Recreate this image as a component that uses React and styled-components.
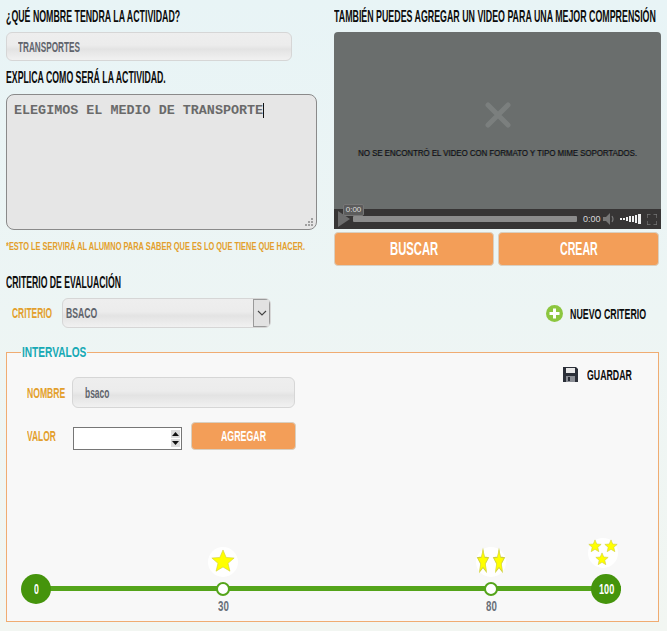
import { useLayoutEffect, useRef, useState } from 'react';
import styled, { createGlobalStyle } from 'styled-components';

const GlobalStyle = createGlobalStyle`
    html, body {
        margin: 0;
        min-height: 631px;
        overflow: hidden;
    }
    body {
        background: linear-gradient(180deg, #e8f4f6 0%, #f2f6f2 100%);
        font-family: "Liberation Sans", Arial, sans-serif;
    }
`;

const glossy = `
    background: linear-gradient(180deg, #eeeeee 0%, #ececec 45%, #e3e3e3 60%, #f1f1f1 100%);
    border: 1px solid #d6d6d6;
    border-radius: 6px;
    box-sizing: border-box;
    color: #60646c;
    font-weight: 700;
`;

const Page = styled.div`
    width: 667px;
    height: 631px;
    box-sizing: border-box;
    padding: 8px 6px 0;
`;

const TopRow = styled.div`
    display: grid;
    grid-template-columns: 311px 327px;
    column-gap: 17px;
`;

const Column = styled.div`
    display: flex;
    flex-direction: column;
`;

const FitBox = styled.span`
    display: inline-block;
    text-align: left;
`;

const FitInner = styled.span`
    display: block;
    width: 100%;
    white-space: nowrap;
    transform-origin: 0 50%;
`;

const Fit = ({ w, children }) => {
    const inner = useRef(null);
    const [scale, setScale] = useState(1);
    useLayoutEffect(() => {
        setScale(w / inner.current.scrollWidth);
    }, [w]);
    return (
        <FitBox style={{ width: w }}>
            <FitInner ref={inner} style={{ transform: `scaleX(${scale})` }}>
                {children}
            </FitInner>
        </FitBox>
    );
};

const Heading = styled.h2`
    margin: ${(p) => p.$margin || '0'};
    height: 16px;
    font-size: 16.5px;
    line-height: 16px;
    font-weight: 700;
    color: #0c0c0c;
`;

const TextField = styled.div`
    ${glossy}
    width: ${(p) => p.$width};
    height: ${(p) => p.$height};
    margin: ${(p) => p.$margin || '0'};
    padding-left: ${(p) => p.$indent};
    display: flex;
    align-items: center;
    font-size: 14px;
`;

const TextBox = styled.div`
    position: relative;
    height: 136px;
    box-sizing: border-box;
    margin-top: 9px;
    padding: 8px 7px;
    background: #e6e6e6;
    border: 1px solid #8a8a8a;
    border-radius: 8px;
    font-family: "Liberation Mono", monospace;
    font-size: 13.4px;
    line-height: 15px;
    font-weight: 700;
    color: #6a6a6a;
`;

const Caret = styled.span`
    border-right: 1px solid #111;
`;

const Grip = styled.svg`
    position: absolute;
    right: 2px;
    bottom: 2px;
`;

const Note = styled.p`
    margin: 9px 0 0;
    font-size: 11.5px;
    line-height: 14px;
    font-weight: 700;
    color: #e39f2c;
`;

const Video = styled.div`
    position: relative;
    height: 197px;
    margin-top: 8px;
    background: #6a6e6d;
    border-radius: 4px 4px 0 0;
    display: flex;
    flex-direction: column;
`;

const Stage = styled.div`
    flex: 1;
    display: flex;
    flex-direction: column;
    align-items: center;
    padding-top: 70px;
`;

const VideoMessage = styled.div`
    margin-top: 19px;
    font-size: 9.5px;
    line-height: 12px;
    color: #111;
    text-shadow: 0.8px 0 0 #2f4560, -0.6px 0 0 #7a6a45;
`;

const Controls = styled.div`
    height: 20px;
    background: #373535;
    display: flex;
    align-items: center;
    padding: 0 4px;
    gap: 3px;
`;

const Progress = styled.div`
    flex: none;
    width: 224px;
    height: 6px;
    border-radius: 1px;
    background: #8c8c8c;
`;

const TimeText = styled.span`
    flex: none;
    margin-left: 3px;
    width: 17px;
    font-size: 9px;
    color: #d8d8d8;
`;

const ControlIcon = styled.svg`
    flex: none;
    margin-left: ${(p) => p.$left || '0'};
`;

const TimeBubble = styled.div`
    position: absolute;
    left: 9px;
    bottom: 13px;
    width: 21px;
    height: 12px;
    background: #5c5c5c;
    border: 1px solid #777;
    border-radius: 2px;
    box-sizing: border-box;
    font-size: 8px;
    line-height: 10px;
    text-align: center;
    color: #dcdcdc;
`;

const ButtonRow = styled.div`
    display: grid;
    grid-template-columns: 160px 161px;
    column-gap: 4px;
    margin-top: 3px;
`;

const OrangeButton = styled.button`
    height: ${(p) => p.$height};
    width: ${(p) => p.$width || 'auto'};
    padding: 0;
    background: #f39e58;
    border: 1px solid #d9cfc0;
    border-radius: 4px;
    color: #fff;
    font-family: inherit;
    font-size: ${(p) => p.$size};
    font-weight: 700;
`;

const CriterionBlock = styled.div`
    margin-top: 8px;
`;

const CriterionRow = styled.div`
    display: flex;
    align-items: center;
    margin-top: 8px;
    height: 30px;
`;

const FieldLabel = styled.label`
    font-size: 14.5px;
    font-weight: 700;
    color: #e39f2c;
    width: ${(p) => p.$width};
    padding-left: ${(p) => p.$indent};
    box-sizing: border-box;
    flex: none;
`;

const SelectBox = styled.div`
    ${glossy}
    width: 209px;
    height: 30px;
    display: flex;
    align-items: center;
    justify-content: space-between;
    padding-left: 3px;
    font-size: 14.5px;
    overflow: hidden;
`;

const SelectArrow = styled.span`
    width: 17px;
    height: 28px;
    display: flex;
    align-items: center;
    justify-content: center;
    background: #e2e2e2;
    border: 1px solid #9a9a9a;
    box-sizing: border-box;
`;

const ActionLink = styled.a`
    display: flex;
    align-items: center;
    gap: ${(p) => p.$gap};
    margin: ${(p) => p.$margin};
    color: #0c0c0c;
    font-size: 15px;
    font-weight: 700;
`;

const Fieldset = styled.fieldset`
    position: relative;
    margin: 16px 0 0;
    width: 653px;
    height: 278px;
    box-sizing: border-box;
    padding: 0 14px 0 18px;
    background: #f8f8f8;
    border: 1px solid #f0ac72;
`;

const Legend = styled.legend`
    margin-left: -4px;
    padding: 0 1px;
    font-size: 15.5px;
    line-height: 16px;
    font-weight: 700;
    color: #16a9b5;
`;

const FormArea = styled.div`
    display: grid;
    grid-template-columns: 272px 1fr;
    padding-top: 17px;
`;

const FormRow = styled.div`
    display: flex;
    align-items: center;
    margin-bottom: ${(p) => p.$gap || '0'};
`;

const ValueBox = styled.div`
    width: 109px;
    height: 23px;
    box-sizing: border-box;
    margin: 5px 9px 0 1px;
    background: #fff;
    border: 1px solid #767676;
    display: flex;
    align-items: center;
    justify-content: flex-end;
    padding-right: 1px;
`;

const ValueInput = styled.input`
    flex: 1;
    min-width: 0;
    height: 100%;
    padding: 0 1px;
    border: 0;
    outline: none;
    background: transparent;
`;

const Spinner = styled.div`
    width: 9px;
    display: flex;
    flex-direction: column;
    gap: 1px;
`;

const SpinStep = styled.span`
    height: 8px;
    background: #dcdcdc;
    display: flex;
    align-items: center;
    justify-content: center;
`;

const Timeline = styled.div`
    position: absolute;
    left: 14px;
    right: 37px;
    top: 184px;
    height: 70px;
`;

const Track = styled.div`
    position: absolute;
    left: 15px;
    right: 0;
    top: 42px;
    height: 5px;
    background: #54a41a;
`;

const EndPoint = styled.div`
    position: absolute;
    top: 30px;
    width: 30px;
    height: 30px;
    margin-left: -15px;
    border-radius: 50%;
    background: #45940c;
    color: #fff;
    font-size: 14px;
    font-weight: 700;
    line-height: 30px;
    text-align: center;
`;

const Marker = styled.div`
    position: absolute;
    top: 38px;
    width: 14px;
    height: 14px;
    margin-left: -7px;
    box-sizing: border-box;
    border-radius: 50%;
    border: 2.5px solid #54a41a;
    background: #fff;
`;

const MarkerValue = styled.span`
    position: absolute;
    top: 54px;
    width: 30px;
    margin-left: -15px;
    text-align: center;
    font-size: 15px;
    font-weight: 700;
    line-height: 16px;
    color: #6a7078;
`;

const Badge = styled.svg`
    position: absolute;
    top: ${(p) => p.$top}px;
    width: 30px;
    height: 30px;
    margin-left: -15px;
`;

const STAR = '12,1.5 15,8.6 22.6,9.2 16.8,14.2 18.6,21.7 12,17.7 5.4,21.7 7.2,14.2 1.4,9.2 9,8.6';

const BadgeStar = ({ x, y, sx, sy }) => (
    <polygon
        points={STAR}
        transform={`translate(${x} ${y}) scale(${sx} ${sy}) translate(-12 -12)`}
        fill="#ffff00"
        stroke="#cfcf3a"
        strokeWidth={0.6 / Math.max(sx, 0.5)}
    />
);

const points = [
    { left: 202, value: 30, top: 3, stars: [{ x: 15, y: 14, sx: 1.05, sy: 1.05 }] },
    {
        left: 470,
        value: 80,
        top: 3,
        stars: [
            { x: 7, y: 14, sx: 0.52, sy: 1.12 },
            { x: 23, y: 14, sx: 0.52, sy: 1.12 },
        ],
    },
    {
        left: 582,
        top: -6,
        stars: [
            { x: 7, y: 8, sx: 0.58, sy: 0.58 },
            { x: 23, y: 8, sx: 0.58, sy: 0.58 },
            { x: 14, y: 21, sx: 0.58, sy: 0.58 },
        ],
    },
];

const App = () => {
    return (
        <Page>
            <GlobalStyle />
            <TopRow>
                <Column>
                    <Heading><Fit w={174}>¿QUÉ NOMBRE TENDRA LA ACTIVIDAD?</Fit></Heading>
                    <TextField $width="286px" $height="29px" $indent="11px" $margin="8px 0">
                        <Fit w={62}>TRANSPORTES</Fit>
                    </TextField>
                    <Heading><Fit w={160}>EXPLICA COMO SERÁ LA ACTIVIDAD.</Fit></Heading>
                    <TextBox>
                        <Caret>ELEGIMOS EL MEDIO DE TRANSPORTE</Caret>
                        <Grip width="10" height="10" viewBox="0 0 10 10">
                            <g fill="#a0a0a0">
                                <rect x="7" y="1" width="2" height="2" />
                                <rect x="4" y="4" width="2" height="2" />
                                <rect x="7" y="4" width="2" height="2" />
                                <rect x="1" y="7" width="2" height="2" />
                                <rect x="4" y="7" width="2" height="2" />
                                <rect x="7" y="7" width="2" height="2" />
                            </g>
                        </Grip>
                    </TextBox>
                    <Note><Fit w={299}>*ESTO LE SERVIRÁ AL ALUMNO PARA SABER QUE ES LO QUE TIENE QUE HACER.</Fit></Note>
                </Column>
                <Column>
                    <Heading><Fit w={322}>TAMBIÉN PUEDES AGREGAR UN VIDEO PARA UNA MEJOR COMPRENSIÓN</Fit></Heading>
                    <Video>
                        <Stage>
                            <svg width="26" height="26" viewBox="0 0 26 26">
                                <path d="M3 3 L23 23 M23 3 L3 23" stroke="#7b7f7e" strokeWidth="5" strokeLinecap="round" />
                            </svg>
                            <VideoMessage><Fit w={279}>NO SE ENCONTRÓ EL VIDEO CON FORMATO Y TIPO MIME SOPORTADOS.</Fit></VideoMessage>
                        </Stage>
                        <Controls>
                            <ControlIcon width="12" height="16" viewBox="0 0 12 16">
                                <polygon points="0,0 12,8 0,16" fill="#6d6d6d" />
                            </ControlIcon>
                            <Progress />
                            <TimeText>0:00</TimeText>
                            <ControlIcon width="13" height="12" viewBox="0 0 13 12">
                                <path d="M0 4 H3 L7 0 V12 L3 8 H0 Z" fill="#777" />
                                <path d="M9 3 Q11 6 9 9" stroke="#777" fill="none" strokeWidth="1.2" />
                            </ControlIcon>
                            <ControlIcon width="22" height="12" viewBox="0 0 22 12" $left="1px">
                                <g fill="#f0f0f0">
                                    <rect x="0" y="5" width="2" height="2" />
                                    <rect x="3" y="5" width="2" height="2" />
                                    <rect x="6" y="4" width="2" height="4" />
                                    <rect x="9" y="3" width="2" height="6" />
                                    <rect x="12" y="3" width="2" height="6" />
                                    <rect x="15" y="2" width="2" height="8" />
                                    <rect x="18" y="1" width="3" height="10" />
                                </g>
                            </ControlIcon>
                            <ControlIcon width="10" height="11" viewBox="0 0 10 11" $left="2px">
                                <path d="M0 4V0H3.5M6.5 0H10V4M10 7V11H6.5M3.5 11H0V7" stroke="#777" fill="none" strokeWidth="1.3" />
                            </ControlIcon>
                        </Controls>
                        <TimeBubble>0:00</TimeBubble>
                    </Video>
                    <ButtonRow>
                        <OrangeButton $height="34px" $size="19px"><Fit w={48}>BUSCAR</Fit></OrangeButton>
                        <OrangeButton $height="34px" $size="19px"><Fit w={38}>CREAR</Fit></OrangeButton>
                    </ButtonRow>
                </Column>
            </TopRow>

            <CriterionBlock>
                <Heading><Fit w={115}>CRITERIO DE EVALUACIÓN</Fit></Heading>
                <CriterionRow>
                    <FieldLabel $width="56px" $indent="6px"><Fit w={40}>CRITERIO</Fit></FieldLabel>
                    <SelectBox>
                        <Fit w={31}>BSACO</Fit>
                        <SelectArrow>
                            <svg width="10" height="6" viewBox="0 0 10 6">
                                <path d="M1 1 L5 5 L9 1" stroke="#444" fill="none" strokeWidth="1.1" />
                            </svg>
                        </SelectArrow>
                    </SelectBox>
                    <ActionLink $gap="7px" $margin="0 15px 0 auto">
                        <svg width="17" height="17" viewBox="0 0 17 17">
                            <circle cx="8.5" cy="8.5" r="8.5" fill="#8cc63f" />
                            <path d="M8.5 3.5V13.5M3.5 8.5H13.5" stroke="#fff" strokeWidth="3" />
                        </svg>
                        <Fit w={76}>NUEVO CRITERIO</Fit>
                    </ActionLink>
                </CriterionRow>
            </CriterionBlock>

            <Fieldset>
                <Legend><Fit w={64}>INTERVALOS</Fit></Legend>
                <FormArea>
                    <div>
                        <FormRow $gap="14px">
                            <FieldLabel $width="47px" $indent="2px"><Fit w={38}>NOMBRE</Fit></FieldLabel>
                            <TextField $width="223px" $height="31px" $indent="12px">
                                <Fit w={24}>bsaco</Fit>
                            </TextField>
                        </FormRow>
                        <FormRow>
                            <FieldLabel $width="47px" $indent="2px"><Fit w={29}>VALOR</Fit></FieldLabel>
                            <ValueBox>
                                <ValueInput type="text" />
                                <Spinner>
                                    <SpinStep>
                                        <svg width="7" height="4" viewBox="0 0 7 4"><polygon points="3.5,0 7,4 0,4" fill="#111" /></svg>
                                    </SpinStep>
                                    <SpinStep>
                                        <svg width="7" height="4" viewBox="0 0 7 4"><polygon points="0,0 7,0 3.5,4" fill="#111" /></svg>
                                    </SpinStep>
                                </Spinner>
                            </ValueBox>
                            <OrangeButton $height="28px" $width="105px" $size="14.5px"><Fit w={45}>AGREGAR</Fit></OrangeButton>
                        </FormRow>
                    </div>
                    <ActionLink $gap="9px" $margin="-11px 12px 0 auto" style={{ alignSelf: 'start' }}>
                        <svg width="15" height="15" viewBox="0 0 15 15">
                            <path d="M0 0H13L15 2V15H0Z" fill="#2b2f38" />
                            <rect x="3" y="1" width="9" height="5" fill="#e8e8e8" />
                            <rect x="3" y="9" width="9" height="6" fill="#8a8d94" />
                            <rect x="5" y="10" width="2" height="4" fill="#2b2f38" />
                        </svg>
                        <Fit w={45}>GUARDAR</Fit>
                    </ActionLink>
                </FormArea>
                <Timeline>
                    <Track />
                    <EndPoint style={{ left: 15 }}><Fit w={5}>0</Fit></EndPoint>
                    {points.map((p) => (
                        <div key={p.left}>
                            <Badge $top={p.top} viewBox="0 0 30 30" style={{ left: p.left }}>
                                <circle cx="15" cy="15" r="15" fill="#fff" />
                                {p.stars.map((s) => (
                                    <BadgeStar key={`${s.x}-${s.y}`} {...s} />
                                ))}
                            </Badge>
                            {p.value !== undefined && (
                                <>
                                    <Marker style={{ left: p.left }} />
                                    <MarkerValue style={{ left: p.left }}><Fit w={11}>{p.value}</Fit></MarkerValue>
                                </>
                            )}
                        </div>
                    ))}
                    <EndPoint style={{ left: 585 }}><Fit w={15}>100</Fit></EndPoint>
                </Timeline>
            </Fieldset>
        </Page>
    );
};

export default App;
